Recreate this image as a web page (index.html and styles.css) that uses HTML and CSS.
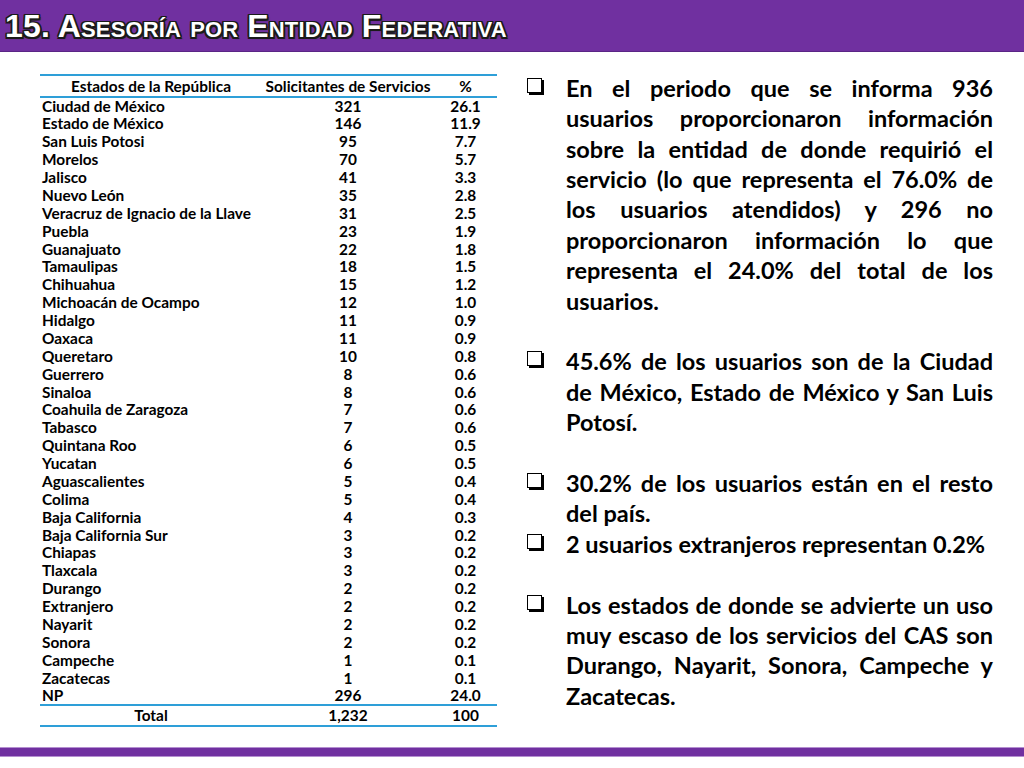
FILE: index.html
```html
<!DOCTYPE html>
<html lang="es">
<head>
<meta charset="utf-8">
<title>15. Asesoría por Entidad Federativa</title>
<link rel="stylesheet" href="styles.css">
</head>
<body>
<div class="slide">
  <header class="title-bar">
    <h1 class="title">15. Asesoría por Entidad Federativa</h1>
  </header>
  <main class="content">
    <section class="table-wrap">
      <table class="states">
        <thead>
          <tr><th class="c1">Estados de la República</th><th class="c2">Solicitantes de Servicios</th><th class="c3">%</th></tr>
        </thead>
        <tbody>
          <tr><td class="c1">Ciudad de México</td><td class="c2">321</td><td class="c3">26.1</td></tr>
          <tr><td class="c1">Estado de México</td><td class="c2">146</td><td class="c3">11.9</td></tr>
          <tr><td class="c1">San Luis Potosi</td><td class="c2">95</td><td class="c3">7.7</td></tr>
          <tr><td class="c1">Morelos</td><td class="c2">70</td><td class="c3">5.7</td></tr>
          <tr><td class="c1">Jalisco</td><td class="c2">41</td><td class="c3">3.3</td></tr>
          <tr><td class="c1">Nuevo León</td><td class="c2">35</td><td class="c3">2.8</td></tr>
          <tr><td class="c1">Veracruz de Ignacio de la Llave</td><td class="c2">31</td><td class="c3">2.5</td></tr>
          <tr><td class="c1">Puebla</td><td class="c2">23</td><td class="c3">1.9</td></tr>
          <tr><td class="c1">Guanajuato</td><td class="c2">22</td><td class="c3">1.8</td></tr>
          <tr><td class="c1">Tamaulipas</td><td class="c2">18</td><td class="c3">1.5</td></tr>
          <tr><td class="c1">Chihuahua</td><td class="c2">15</td><td class="c3">1.2</td></tr>
          <tr><td class="c1">Michoacán de Ocampo</td><td class="c2">12</td><td class="c3">1.0</td></tr>
          <tr><td class="c1">Hidalgo</td><td class="c2">11</td><td class="c3">0.9</td></tr>
          <tr><td class="c1">Oaxaca</td><td class="c2">11</td><td class="c3">0.9</td></tr>
          <tr><td class="c1">Queretaro</td><td class="c2">10</td><td class="c3">0.8</td></tr>
          <tr><td class="c1">Guerrero</td><td class="c2">8</td><td class="c3">0.6</td></tr>
          <tr><td class="c1">Sinaloa</td><td class="c2">8</td><td class="c3">0.6</td></tr>
          <tr><td class="c1">Coahuila de Zaragoza</td><td class="c2">7</td><td class="c3">0.6</td></tr>
          <tr><td class="c1">Tabasco</td><td class="c2">7</td><td class="c3">0.6</td></tr>
          <tr><td class="c1">Quintana Roo</td><td class="c2">6</td><td class="c3">0.5</td></tr>
          <tr><td class="c1">Yucatan</td><td class="c2">6</td><td class="c3">0.5</td></tr>
          <tr><td class="c1">Aguascalientes</td><td class="c2">5</td><td class="c3">0.4</td></tr>
          <tr><td class="c1">Colima</td><td class="c2">5</td><td class="c3">0.4</td></tr>
          <tr><td class="c1">Baja California</td><td class="c2">4</td><td class="c3">0.3</td></tr>
          <tr><td class="c1">Baja California Sur</td><td class="c2">3</td><td class="c3">0.2</td></tr>
          <tr><td class="c1">Chiapas</td><td class="c2">3</td><td class="c3">0.2</td></tr>
          <tr><td class="c1">Tlaxcala</td><td class="c2">3</td><td class="c3">0.2</td></tr>
          <tr><td class="c1">Durango</td><td class="c2">2</td><td class="c3">0.2</td></tr>
          <tr><td class="c1">Extranjero</td><td class="c2">2</td><td class="c3">0.2</td></tr>
          <tr><td class="c1">Nayarit</td><td class="c2">2</td><td class="c3">0.2</td></tr>
          <tr><td class="c1">Sonora</td><td class="c2">2</td><td class="c3">0.2</td></tr>
          <tr><td class="c1">Campeche</td><td class="c2">1</td><td class="c3">0.1</td></tr>
          <tr><td class="c1">Zacatecas</td><td class="c2">1</td><td class="c3">0.1</td></tr>
          <tr><td class="c1">NP</td><td class="c2">296</td><td class="c3">24.0</td></tr>
        </tbody>
        <tfoot>
          <tr><td class="c1 total">Total</td><td class="c2">1,232</td><td class="c3">100</td></tr>
        </tfoot>
      </table>
    </section>
    <section class="notes">
      <div class="note">
        <span class="box"></span>
        <p class="text">
          <span class="ln">En el periodo que se informa 936</span>
          <span class="ln">usuarios proporcionaron información</span>
          <span class="ln">sobre la entidad de donde requirió el</span>
          <span class="ln">servicio (lo que representa el 76.0% de</span>
          <span class="ln">los usuarios atendidos) y 296 no</span>
          <span class="ln">proporcionaron información lo que</span>
          <span class="ln">representa el 24.0% del total de los</span>
          <span class="ln last">usuarios.</span>
        </p>
      </div>
      <div class="spacer"></div>
      <div class="note">
        <span class="box"></span>
        <p class="text">
          <span class="ln">45.6% de los usuarios son de la Ciudad</span>
          <span class="ln">de México, Estado de México y San Luis</span>
          <span class="ln last">Potosí.</span>
        </p>
      </div>
      <div class="spacer"></div>
      <div class="note">
        <span class="box"></span>
        <p class="text">
          <span class="ln">30.2% de los usuarios están en el resto</span>
          <span class="ln last">del país.</span>
        </p>
      </div>
      <div class="note">
        <span class="box"></span>
        <p class="text">
          <span class="ln last">2 usuarios extranjeros representan 0.2%</span>
        </p>
      </div>
      <div class="spacer"></div>
      <div class="note">
        <span class="box"></span>
        <p class="text">
          <span class="ln">Los estados de donde se advierte un uso</span>
          <span class="ln">muy escaso de los servicios del CAS son</span>
          <span class="ln">Durango, Nayarit, Sonora, Campeche y</span>
          <span class="ln last">Zacatecas.</span>
        </p>
      </div>
    </section>
  </main>
  <footer class="bottom-bar"></footer>
</div>
</body>
</html>
```

FILE: styles.css
```css
* { box-sizing: border-box; }

html, body {
  margin: 0;
  padding: 0;
  background: #ffffff;
}

.slide {
  width: 1024px;
  height: 768px;
  display: flex;
  flex-direction: column;
  overflow: hidden;
}

.title-bar {
  height: 52px;
  flex: 0 0 52px;
  background: #7030a0;
  border-bottom: 1px solid #5a2585;
  padding: 0 0 0 5px;
}

.title {
  margin: 0;
  font-family: "Liberation Sans", Arial, sans-serif;
  font-weight: bold;
  font-size: 32px;
  line-height: 52px;
  letter-spacing: 0.15px;
  font-variant: small-caps;
  color: #ffffff;
  text-shadow:
    -1.5px -1.5px 0 #1a1a1a,
     1.5px -1.5px 0 #1a1a1a,
    -1.5px  1.5px 0 #1a1a1a,
     1.5px  1.5px 0 #1a1a1a,
     0 -1.5px 0 #1a1a1a,
     0  1.5px 0 #1a1a1a,
    -1.5px 0 0 #1a1a1a,
     1.5px 0 0 #1a1a1a,
     2px 2px 1px #333;
}

.content {
  flex: 1;
  display: flex;
  align-items: flex-start;
}

.table-wrap {
  margin: 22px 0 0 40px;
  width: 457px;
}

.states {
  width: 457px;
  border-collapse: collapse;
  font-family: Lato, "Liberation Sans", sans-serif;
  font-weight: bold;
  font-size: 15.4px;
  color: #000;
}

.states th,
.states td {
  padding: 0;
  height: 17.88px;
  line-height: 17px;
  font-weight: bold;
  white-space: nowrap;
}

.states thead tr {
  border-top: 2px solid #2e9fd8;
  border-bottom: 2px solid #2e9fd8;
}

.states thead th {
  height: 22px;
}

.states tfoot tr {
  border-top: 2px solid #2e9fd8;
  border-bottom: 2px solid #2e9fd8;
}

.states tfoot td {
  height: 20.5px;
}

.states .c1 { width: 222px; text-align: left; padding-left: 2px; }
.states th.c1, .states td.total { text-align: center; padding-left: 0; }
.states .c2 { width: 172px; text-align: center; }
.states .c3 { width: 63px; text-align: center; }

.notes {
  margin: 20.8px 0 0 30px;
  width: 466px;
  font-family: Lato, "Liberation Sans", sans-serif;
  font-weight: bold;
  font-size: 23.5px;
  line-height: 30.4px;
  color: #000;
}

.note {
  display: flex;
  align-items: flex-start;
}

.box {
  flex: 0 0 auto;
  width: 15px;
  height: 15px;
  margin-top: 5px;
  border: 1.5px solid #000;
  box-shadow: 2px 2px 0 #000;
  background: #fff;
}

.text {
  margin: 0 0 0 24px;
  width: 427px;
}

.ln {
  display: block;
  white-space: nowrap;
  text-align: justify;
  text-align-last: justify;
}

.ln.last {
  text-align: left;
  text-align-last: left;
}

.spacer {
  height: 30.4px;
}

.bottom-bar {
  flex: 0 0 10px;
  height: 10px;
  margin-bottom: 11px;
  background: #7030a0;
  border-top: 1px solid #b48fd0;
  border-bottom: 1px solid #b48fd0;
}
```
